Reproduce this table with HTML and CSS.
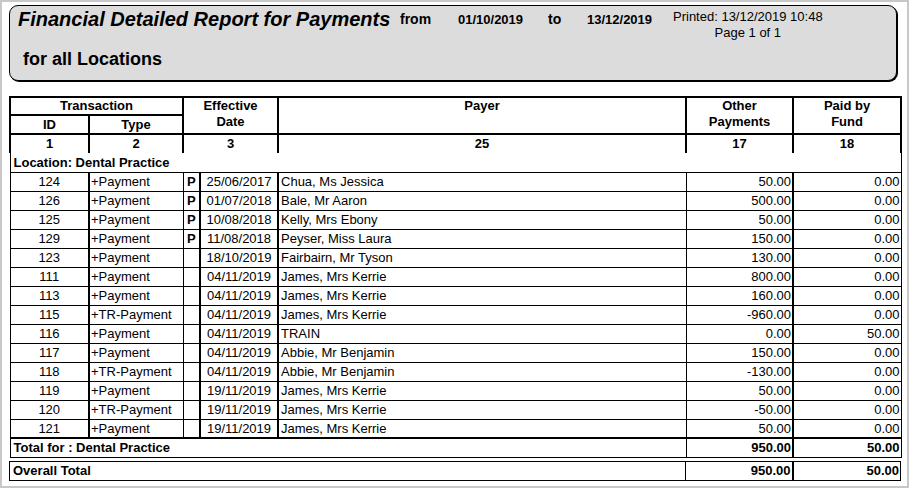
FILE: index.html
```html
<!DOCTYPE html>
<html lang="en">
<head>
<meta charset="utf-8">
<title>Financial Detailed Report for Payments</title>
<link rel="stylesheet" href="styles.css">
</head>
<body>
<div class="frame">
  <div class="report-head">
    <div class="head-top">
      <div class="title">Financial Detailed Report for Payments</div>
      <div class="lbl lbl-from">from</div>
      <div class="date date-from">01/10/2019</div>
      <div class="lbl lbl-to">to</div>
      <div class="date date-to">13/12/2019</div>
      <div class="printed">
        <div>Printed: 13/12/2019 10:48</div>
        <div>Page 1 of 1</div>
      </div>
    </div>
    <div class="head-sub">for all Locations</div>
  </div>

  <table class="rep">
    <colgroup>
      <col class="c-id"><col class="c-type"><col class="c-p"><col class="c-date"><col class="c-payer"><col class="c-other"><col class="c-fund">
    </colgroup>
    <thead>
      <tr class="hr1">
        <th colspan="2">Transaction</th>
        <th colspan="2" rowspan="2" class="top">Effective<br>Date</th>
        <th rowspan="2" class="top">Payer</th>
        <th rowspan="2" class="top">Other<br>Payments</th>
        <th rowspan="2" class="top">Paid by<br>Fund</th>
      </tr>
      <tr class="hr2">
        <th>ID</th>
        <th>Type</th>
      </tr>
      <tr class="hr3">
        <th>1</th>
        <th>2</th>
        <th colspan="2">3</th>
        <th>25</th>
        <th>17</th>
        <th>18</th>
      </tr>
    </thead>
    <tbody>
      <tr class="loc"><td colspan="7">Location: Dental Practice</td></tr>
      <tr class="row"><td class="id">124</td><td class="type">+Payment</td><td class="p">P</td><td class="dt">25/06/2017</td><td class="payer">Chua, Ms Jessica</td><td class="amt other">50.00</td><td class="amt fund">0.00</td></tr>
      <tr class="row"><td class="id">126</td><td class="type">+Payment</td><td class="p">P</td><td class="dt">01/07/2018</td><td class="payer">Bale, Mr Aaron</td><td class="amt other">500.00</td><td class="amt fund">0.00</td></tr>
      <tr class="row"><td class="id">125</td><td class="type">+Payment</td><td class="p">P</td><td class="dt">10/08/2018</td><td class="payer">Kelly, Mrs Ebony</td><td class="amt other">50.00</td><td class="amt fund">0.00</td></tr>
      <tr class="row"><td class="id">129</td><td class="type">+Payment</td><td class="p">P</td><td class="dt">11/08/2018</td><td class="payer">Peyser, Miss Laura</td><td class="amt other">150.00</td><td class="amt fund">0.00</td></tr>
      <tr class="row"><td class="id">123</td><td class="type">+Payment</td><td class="p"></td><td class="dt">18/10/2019</td><td class="payer">Fairbairn, Mr Tyson</td><td class="amt other">130.00</td><td class="amt fund">0.00</td></tr>
      <tr class="row"><td class="id">111</td><td class="type">+Payment</td><td class="p"></td><td class="dt">04/11/2019</td><td class="payer">James, Mrs Kerrie</td><td class="amt other">800.00</td><td class="amt fund">0.00</td></tr>
      <tr class="row"><td class="id">113</td><td class="type">+Payment</td><td class="p"></td><td class="dt">04/11/2019</td><td class="payer">James, Mrs Kerrie</td><td class="amt other">160.00</td><td class="amt fund">0.00</td></tr>
      <tr class="row"><td class="id">115</td><td class="type">+TR-Payment</td><td class="p"></td><td class="dt">04/11/2019</td><td class="payer">James, Mrs Kerrie</td><td class="amt other">-960.00</td><td class="amt fund">0.00</td></tr>
      <tr class="row"><td class="id">116</td><td class="type">+Payment</td><td class="p"></td><td class="dt">04/11/2019</td><td class="payer">TRAIN</td><td class="amt other">0.00</td><td class="amt fund">50.00</td></tr>
      <tr class="row"><td class="id">117</td><td class="type">+Payment</td><td class="p"></td><td class="dt">04/11/2019</td><td class="payer">Abbie, Mr Benjamin</td><td class="amt other">150.00</td><td class="amt fund">0.00</td></tr>
      <tr class="row"><td class="id">118</td><td class="type">+TR-Payment</td><td class="p"></td><td class="dt">04/11/2019</td><td class="payer">Abbie, Mr Benjamin</td><td class="amt other">-130.00</td><td class="amt fund">0.00</td></tr>
      <tr class="row"><td class="id">119</td><td class="type">+Payment</td><td class="p"></td><td class="dt">19/11/2019</td><td class="payer">James, Mrs Kerrie</td><td class="amt other">50.00</td><td class="amt fund">0.00</td></tr>
      <tr class="row"><td class="id">120</td><td class="type">+TR-Payment</td><td class="p"></td><td class="dt">19/11/2019</td><td class="payer">James, Mrs Kerrie</td><td class="amt other">-50.00</td><td class="amt fund">0.00</td></tr>
      <tr class="row"><td class="id">121</td><td class="type">+Payment</td><td class="p"></td><td class="dt">19/11/2019</td><td class="payer">James, Mrs Kerrie</td><td class="amt other">50.00</td><td class="amt fund">0.00</td></tr>
      <tr class="total"><td colspan="5" class="total-lbl">Total for : Dental Practice</td><td class="amt other">950.00</td><td class="amt fund">50.00</td></tr>
    </tbody>
  </table>

  <table class="rep overall">
    <colgroup>
      <col class="c-id"><col class="c-type"><col class="c-p"><col class="c-date"><col class="c-payer"><col class="c-other"><col class="c-fund">
    </colgroup>
    <tbody>
      <tr class="total"><td colspan="5" class="total-lbl">Overall Total</td><td class="amt other">950.00</td><td class="amt fund">50.00</td></tr>
    </tbody>
  </table>
</div>
</body>
</html>
```

FILE: styles.css
```css
* { box-sizing: border-box; }
html, body { margin: 0; padding: 0; background: #fff; }
body {
  font-family: "Liberation Sans", Arial, sans-serif;
  color: #000;
}

.frame {
  width: 909px;
  height: 488px;
  border: 2px solid #c8c8c8;
  padding: 3px 0 0 7px;
  overflow: hidden;
}

/* ---------- report header box ---------- */
.report-head {
  width: 888px;
  height: 76px;
  border: 1px solid #000;
  border-radius: 9px;
  background: #dcdcdc;
  box-shadow: 1px 1px 0 #000;
}
.head-top {
  display: flex;
  align-items: flex-start;
  height: 36px;
  padding: 2px 0 0 8px;
}
.title {
  width: 382px;
  font-size: 20px;
  line-height: 23px;
  font-weight: bold;
  font-style: italic;
  white-space: nowrap;
}
.lbl {
  font-size: 14px;
  line-height: 16px;
  font-weight: bold;
  margin-top: 3px;
}
.lbl-from { width: 58px; }
.lbl-to { width: 39px; }
.date {
  font-size: 13px;
  line-height: 15px;
  font-weight: bold;
  margin-top: 4px;
}
.date-from { width: 90px; }
.date-to { width: 86px; }
.printed {
  display: flex;
  flex-direction: column;
  align-items: center;
  font-size: 13px;
  line-height: 16px;
  margin-top: 1px;
  white-space: nowrap;
}
.head-sub {
  margin-top: 7px;
  padding-left: 13px;
  font-size: 18px;
  line-height: 20px;
  font-weight: bold;
}

/* ---------- table ---------- */
.rep {
  width: 891px;
  table-layout: fixed;
  border-collapse: collapse;
  margin-top: 15px;
  font-size: 13px;
}
.c-id { width: 79px; }
.c-type { width: 94px; }
.c-p { width: 17px; }
.c-date { width: 78px; }
.c-payer { width: 408px; }
.c-other { width: 107px; }
.c-fund { width: 108px; }

.rep th {
  border: 2px solid #000;
  padding: 0;
  font-weight: bold;
  font-size: 13px;
  line-height: 16px;
  text-align: center;
  vertical-align: middle;
}
.rep th.top { vertical-align: top; padding-top: 0; }
.hr1 { height: 17px; }
.hr2 { height: 19px; }
.hr3 { height: 19px; }
.hr3 th { border-bottom: none; }

.rep td {
  padding: 0 2px;
  border: 1px solid #000;
  line-height: 15px;
  white-space: nowrap;
  overflow: hidden;
}
.loc { height: 19px; }
.loc td {
  border-top: none;
  font-weight: bold;
  padding-left: 3px;
}
.row { height: 19px; }
.id { text-align: center; }
.type { border-left-width: 2px !important; padding-left: 1px !important; }
.p { text-align: center; font-weight: bold; }
.dt { text-align: center; border-left-width: 2px !important; }
.payer { border-left-width: 2px !important; }
.amt { text-align: right; padding-right: 1px !important; }
.fund { border-left-width: 2px !important; }

.total { height: 19px; }
.total td { font-weight: bold; border-top-width: 2px; }
.total-lbl { padding-left: 3px !important; }

.overall { margin-top: 3px; }
.overall .total td { border-top-width: 1px; }
```
